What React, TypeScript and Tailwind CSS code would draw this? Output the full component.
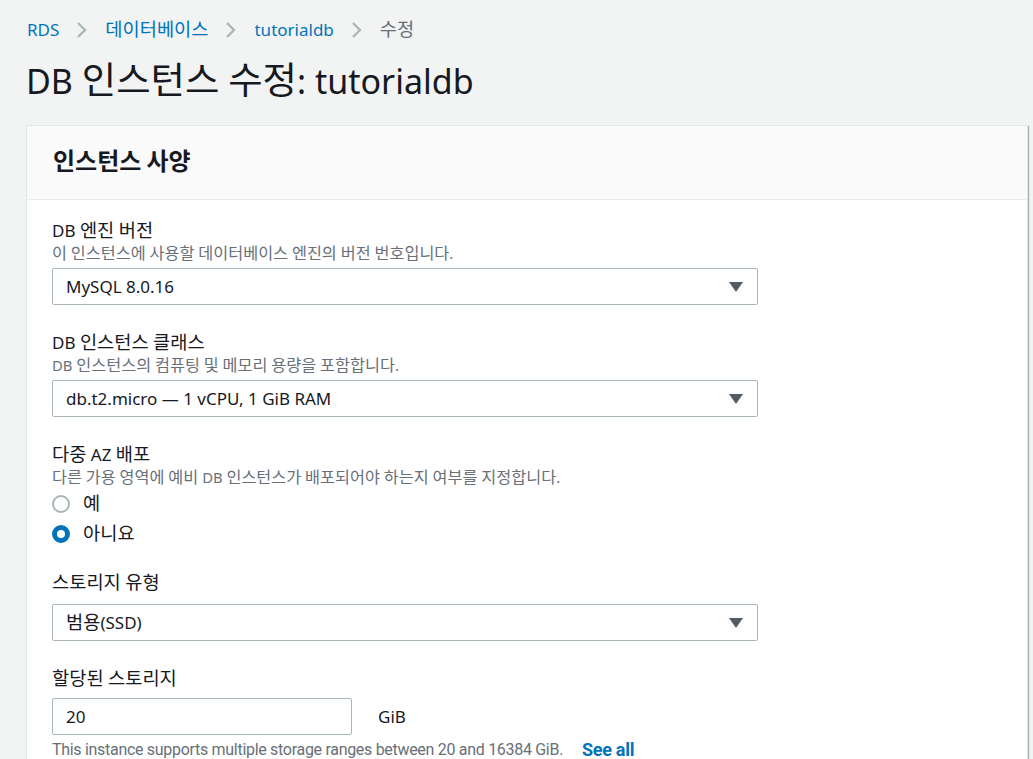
import React from "react"

const font = { fontFamily: '"Noto Sans", "Noto Sans CJK KR", sans-serif' }

// Hangul runs are drawn a little larger so they match the reference's wider Korean glyphs
function K({ children, big }: { children: string; big?: boolean }) {
  const parts = children.split(/([\uac00-\ud7a3]+)/)
  return (
    <>
      {parts.map((p, i) =>
        /[\uac00-\ud7a3]/.test(p) ? (
          <span key={i} className={big ? "text-[1.2em] leading-none" : "text-[1.1em] leading-none"}>
            {p}
          </span>
        ) : (
          <React.Fragment key={i}>{p}</React.Fragment>
        )
      )}
    </>
  )
}

function Chevron() {
  return (
    <svg width="12" height="18" viewBox="0 0 12 18" className="mx-[17px]">
      <path d="M2 2l7 7-7 7" fill="none" stroke="#aab7b8" strokeWidth="2.4" />
    </svg>
  )
}

function Select({ value }: { value: string }) {
  return (
    <div className="flex items-center justify-between w-[706px] h-[37px] border border-[#aab7b8] rounded-[2px] bg-white pl-[13px] pr-[14px]">
      <span className="text-[17px] leading-[24px] text-[#16191f]">
        <K>{value}</K>
      </span>
      <svg width="14" height="10" viewBox="0 0 14 10">
        <path d="M0 0h14L7 10z" fill="#545b64" />
      </svg>
    </div>
  )
}

function Field({ label, desc, children }: { label: string; desc?: string; children: React.ReactNode }) {
  return (
    <div className="flex flex-col">
      <div className="text-[17px] leading-[24px] text-[#16191f]">
        <K>{label}</K>
      </div>
      {desc ? (
        <div className="text-[14.8px] leading-[20px] text-[#687078] mb-[5px]">
          <K>{desc}</K>
        </div>
      ) : (
        <div className="h-[7px]" />
      )}
      {children}
    </div>
  )
}

function Radio({ label, checked }: { label: string; checked?: boolean }) {
  return (
    <label className="flex items-center gap-[13px] h-[22px]">
      <span
        className={
          checked
            ? "w-[18px] h-[18px] rounded-full border-[5px] border-[#0073bb] bg-white"
            : "w-[18px] h-[18px] rounded-full border-2 border-[#aab7b8] bg-white"
        }
      />
      <span className="text-[17px] leading-[22px] text-[#16191f]">
        <K>{label}</K>
      </span>
    </label>
  )
}

export default function App() {
  return (
    <div className="min-h-[759px] bg-[#f2f3f3] pl-[26px] pr-[5px] pt-[16px]" style={font}>
      <nav className="flex items-center text-[17px] leading-[28px] pl-[1px]">
        <span className="text-[#0073bb]">RDS</span>
        <Chevron />
        <span className="text-[#0073bb]">
          <K>데이터베이스</K>
        </span>
        <Chevron />
        <span className="text-[#0073bb]">tutorialdb</span>
        <Chevron />
        <span className="text-[#687078]">
          <K>수정</K>
        </span>
      </nav>
      <h1 className="text-[34px] leading-[44px] text-[#16191f] mt-[15px] mb-[22px]">
        <K>DB 인스턴스 수정: tutorialdb</K>
      </h1>

      <div className="bg-white border border-[#e3e6e6] shadow-[1px_1px_1px_0_rgba(0,28,36,0.3)]">
        <div className="bg-[#fafafa] border-b border-[#eaeded] h-[74px] flex items-center px-[26px]">
          <h2 className="text-[20px] leading-[28px] font-bold text-[#16191f]">
            <K big>인스턴스 사양</K>
          </h2>
        </div>
        <div className="px-[25px] pt-[19px] pb-[10px] flex flex-col gap-[26px]">
          <Field label="DB 엔진 버전" desc="이 인스턴스에 사용할 데이터베이스 엔진의 버전 번호입니다.">
            <Select value="MySQL 8.0.16" />
          </Field>
          <Field label="DB 인스턴스 클래스" desc="DB 인스턴스의 컴퓨팅 및 메모리 용량을 포함합니다.">
            <Select value="db.t2.micro — 1 vCPU, 1 GiB RAM" />
          </Field>
          <Field label="다중 AZ 배포" desc="다른 가용 영역에 예비 DB 인스턴스가 배포되어야 하는지 여부를 지정합니다.">
            <div className="flex flex-col gap-[8px] pt-[1px]">
              <Radio label="예" />
              <Radio label="아니요" checked />
            </div>
          </Field>
          <Field label="스토리지 유형">
            <div className="mt-[2px]">
              <Select value="범용(SSD)" />
            </div>
          </Field>
          <Field label="할당된 스토리지">
            <div className="flex items-center gap-[26px]">
              <div className="w-[300px] h-[37px] border border-[#aab7b8] rounded-[2px] flex items-center px-[13px] text-[17px] text-[#16191f]">
                20
              </div>
              <span className="text-[17px] text-[#16191f]">GiB</span>
            </div>
            <div
              className="mt-[4px] flex items-center text-[16px] leading-[22px] text-[#687078] tracking-[-0.3px]"
              style={{ fontFamily: '"Roboto", sans-serif' }}
            >
              <span>This instance supports multiple storage ranges between 20 and 16384 GiB.</span>
              <span className="ml-[19px] font-bold text-[18px] text-[#0073bb]">See all</span>
            </div>
          </Field>
        </div>
      </div>
    </div>
  )
}
